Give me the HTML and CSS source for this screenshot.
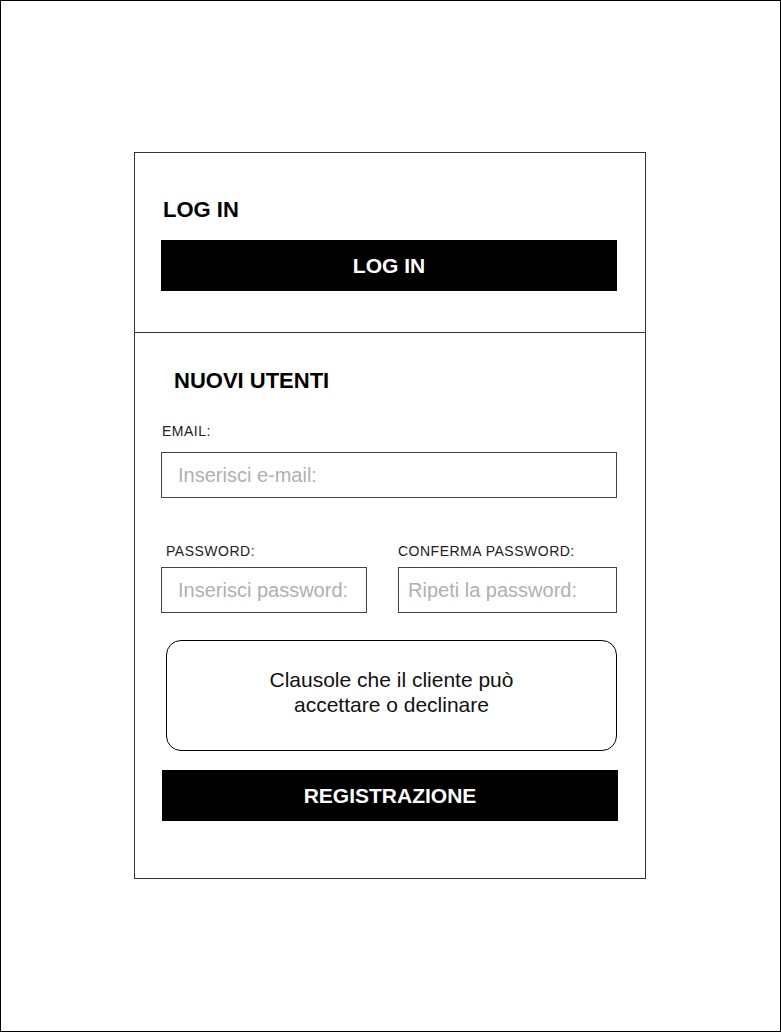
FILE: index.html
```html
<!DOCTYPE html>
<html lang="it">
  <head>
    <meta charset="UTF-8" />
    <meta name="viewport" content="width=device-width, initial-scale=1.0" />
    <title>Accesso</title>
    <link rel="stylesheet" href="styles.css">
  </head>
  <body>
    <div class="frame">
      <div class="card">
        <section class="login">
          <h2 class="title title--login">LOG IN</h2>
          <button class="btn btn--login">LOG IN</button>
        </section>

        <section class="signup">
          <h2 class="title title--signup">NUOVI UTENTI</h2>

          <label class="label label--email" for="email">EMAIL:</label>
          <input id="email" type="email" class="field field--email" placeholder="Inserisci e-mail:" />

          <div class="pw-row">
            <div class="pw-col">
              <label class="label label--pw" for="pw">PASSWORD:</label>
              <input id="pw" type="password" class="field field--pw" placeholder="Inserisci password:" />
            </div>
            <div class="pw-col">
              <label class="label label--confirm" for="pw2">CONFERMA PASSWORD:</label>
              <input id="pw2" type="password" class="field field--confirm" placeholder="Ripeti la password:" />
            </div>
          </div>

          <div class="terms">Clausole che il cliente può<br>accettare o declinare</div>

          <button class="btn btn--register">REGISTRAZIONE</button>
        </section>
      </div>
    </div>
  </body>
</html>
```

FILE: styles.css
```css
* {
  box-sizing: border-box;
}

body {
  margin: 0;
  background: #fff;
  font-family: "Liberation Sans", Arial, sans-serif;
  color: #000;
}

.frame {
  width: 781px;
  height: 1032px;
  border: 1px solid #000;
  padding: 151px 0 0 133px;
}

.card {
  width: 512px;
  border: 1px solid #333;
}

.login {
  padding: 44px 27px 41px 26px;
}

.signup {
  border-top: 1px solid #333;
  padding: 35px 27px 57px 26px;
}

.title {
  margin: 0;
  font-size: 22px;
  line-height: 25px;
  font-weight: bold;
}

.title--login {
  margin-left: 2px;
}

.title--signup {
  margin-left: 13px;
}

.btn {
  display: flex;
  align-items: center;
  justify-content: center;
  width: 456px;
  height: 51px;
  border: none;
  padding: 0;
  background: #000;
  color: #fff;
  font-family: "Liberation Sans", Arial, sans-serif;
  font-size: 21px;
  font-weight: bold;
}

.btn--login {
  margin-top: 18px;
}

.btn--register {
  margin-top: 19px;
  margin-left: 1px;
}

.label {
  display: block;
  font-size: 14px;
  line-height: 16px;
  letter-spacing: 0.5px;
  color: #222;
}

.label--email {
  margin-top: 30px;
  margin-left: 1px;
}

.label--pw {
  margin-left: 5px;
}

.label--confirm {
  margin-left: 0;
}

.field {
  display: block;
  height: 46px;
  border: 1px solid #444;
  border-radius: 0;
  background: #fff;
  font-family: "Liberation Sans", Arial, sans-serif;
  font-size: 20px;
  color: #222;
  outline: none;
}

.field::placeholder {
  color: #b0b0b0;
}

.field--email {
  width: 456px;
  margin-top: 13px;
  padding: 0 0 0 16px;
}

.pw-row {
  display: grid;
  grid-template-columns: 206px 219px;
  column-gap: 31px;
  margin-top: 45px;
}

.pw-col .field {
  margin-top: 8px;
  width: 100%;
}

.field--pw {
  padding: 0 0 0 16px;
}

.field--confirm {
  padding: 0 0 0 9px;
}

.terms {
  display: flex;
  align-items: center;
  justify-content: center;
  width: 451px;
  height: 111px;
  margin: 27px 0 0 5px;
  padding-bottom: 8px;
  border: 1px solid #000;
  border-radius: 15px;
  text-align: center;
  font-size: 21px;
  line-height: 25px;
  color: #111;
}
```
